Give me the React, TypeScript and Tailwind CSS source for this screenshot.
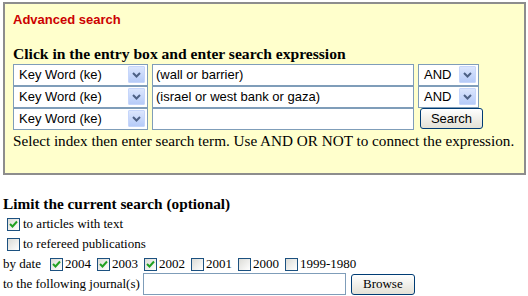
import React from 'react';

const serif = { fontFamily: '"Liberation Serif", "Times New Roman", serif' };

const Arrow: React.FC = () => (
  <span className="flex h-[17px] w-[17px] shrink-0 items-center justify-center rounded-[1px] bg-gradient-to-b from-[#dbe6fd] to-[#b6cbf8] border border-[#c6d6fb]">
    <svg width="9" height="6" viewBox="0 0 9 6">
      <path d="M1 1 L4.5 4.5 L8 1" fill="none" stroke="#4d6185" strokeWidth="2" />
    </svg>
  </span>
);

const Select: React.FC<{ label: string; w: string }> = ({ label, w }) => (
  <div className={`${w} flex h-[22px] items-center justify-between border border-[#7f9db9] bg-white pl-[5px] pr-[2px] text-[13px] text-black`}>
    <span>{label}</span>
    <Arrow />
  </div>
);

const TextBox: React.FC<{ value: string; w: string }> = ({ value, w }) => (
  <div className={`${w} flex h-[22px] items-center border border-[#7f9db9] bg-white px-[3px] text-[13px] text-black`}>
    {value}
  </div>
);

const XpButton: React.FC<{ label: string; w: string }> = ({ label, w }) => (
  <div className={`${w} flex h-[21px] items-center justify-center rounded-[3px] border border-[#003c74] bg-gradient-to-b from-white to-[#e3e1d6] text-[13px] text-black`}>
    {label}
  </div>
);

const Check: React.FC<{ on?: boolean }> = ({ on }) => (
  <span className="flex h-[13px] w-[13px] shrink-0 items-center justify-center border border-[#1c5180] bg-gradient-to-br from-[#dcdcd7] to-white">
    {on && (
      <svg width="9" height="9" viewBox="0 0 9 9">
        <path d="M1 4 L3.5 6.5 L8 1.5" fill="none" stroke="#21a121" strokeWidth="2" />
      </svg>
    )}
  </span>
);

const years: [string, boolean][] = [
  ['2004', true],
  ['2003', true],
  ['2002', true],
  ['2001', false],
  ['2000', false],
  ['1999-1980', false],
];

export default function App() {
  return (
    <div className="h-[296px] w-[528px] bg-white pt-[2px] text-black" style={{ fontFamily: '"Liberation Sans", Arial, sans-serif' }}>
      <div className="ml-[3px] h-[173px] w-[523px] border-2 border-[#8d8d8d] bg-[#ffffcc] pl-[8px]">
        <div className="mt-[6px] text-[13px] font-bold text-[#cc0000]">Advanced search</div>
        <div className="mt-[14px] text-[15.6px] font-bold leading-[19px]" style={serif}>
          Click in the entry box and enter search expression
        </div>
        <div className="mt-[1px] flex flex-col">
          <div className="flex gap-[4px]">
            <Select label="Key Word (ke)" w="w-[135px]" />
            <TextBox value="(wall or barrier)" w="w-[262px]" />
            <Select label="AND" w="w-[61px]" />
          </div>
          <div className="flex gap-[4px]">
            <Select label="Key Word (ke)" w="w-[135px]" />
            <TextBox value="(israel or west bank or gaza)" w="w-[262px]" />
            <Select label="AND" w="w-[61px]" />
          </div>
          <div className="flex items-center gap-[4px]">
            <Select label="Key Word (ke)" w="w-[135px]" />
            <TextBox value="" w="w-[262px]" />
            <div className="pl-[2px]">
              <XpButton label="Search" w="w-[63px]" />
            </div>
          </div>
        </div>
        <div className="mt-[1px] whitespace-nowrap text-[15.2px] leading-[20px]" style={serif}>
          Select index then enter search term. Use AND OR NOT to connect the expression.
        </div>
      </div>

      <div className="pl-[3px] text-[13px]" style={serif}>
        <div className="mt-[19px] text-[15.3px] font-bold leading-[19px]">Limit the current search (optional)</div>
        <div className="mt-[1px] flex h-[20px] items-center gap-[3px] pl-[4px]">
          <Check on />
          <span>to articles with text</span>
        </div>
        <div className="flex h-[20px] items-center gap-[3px] pl-[4px]">
          <Check />
          <span>to refereed publications</span>
        </div>
        <div className="flex h-[20px] items-center">
          <span className="mr-[9px]">by date</span>
          {years.map(([y, on]) => (
            <span key={y} className="mr-[6px] flex items-center gap-[2px]">
              <Check on={on} />
              <span>{y}</span>
            </span>
          ))}
        </div>
        <div className="-mt-[1px] flex h-[22px] items-center gap-[3px]">
          <span>to the following journal(s)</span>
          <TextBox value="" w="w-[203px]" />
          <div className="pl-[2px]">
            <XpButton label="Browse" w="w-[64px]" />
          </div>
        </div>
      </div>
    </div>
  );
}
